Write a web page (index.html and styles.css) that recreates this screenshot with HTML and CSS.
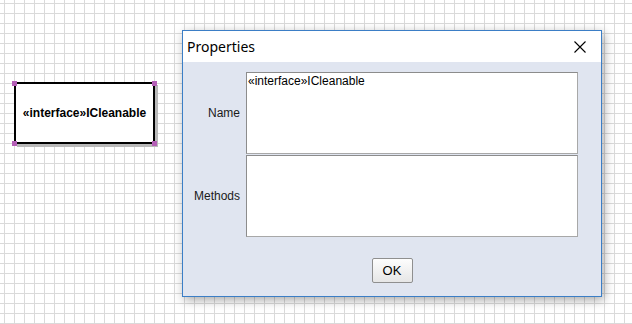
FILE: index.html
```html
<!DOCTYPE html>
<html lang="en">
<head>
  <meta charset="UTF-8">
  <meta name="viewport" content="width=device-width, initial-scale=1.0">
  <title>Class Diagram</title>
  <link rel="stylesheet" href="styles.css">
</head>
<body>
  <div class="canvas">
    <div class="node">
      <span class="handle tl"></span>
      <span class="handle tr"></span>
      <span class="handle bl"></span>
      <span class="handle br"></span>
      <span class="node-label">«interface»ICleanable</span>
    </div>

    <div class="dialog">
      <div class="titlebar">
        <span class="title">Properties</span>
        <svg class="close" width="12" height="12" viewBox="0 0 12 12">
          <path d="M0.5 0.5 L11.5 11.5 M11.5 0.5 L0.5 11.5" stroke="#000" stroke-width="1.1" fill="none"/>
        </svg>
      </div>
      <div class="dialog-body">
        <div class="fields">
          <label for="name">Name</label>
          <textarea id="name">«interface»ICleanable</textarea>
          <label for="methods">Methods</label>
          <textarea id="methods"></textarea>
        </div>
        <div class="buttons">
          <button type="button">OK</button>
        </div>
      </div>
    </div>
  </div>
</body>
</html>
```

FILE: styles.css
```css
:root {
  --grid-line: #dadada;
  --dialog-border: #3b7ec6;
  --dialog-bg: #e0e5f0;
  --handle: #b45fb6;
  --text: #1a1a1a;
}

html, body {
  margin: 0;
  padding: 0;
}

body {
  font-family: "Liberation Sans", Arial, sans-serif;
  background-color: #fff;
  background-image:
    linear-gradient(to right, var(--grid-line) 1px, transparent 1px),
    linear-gradient(to bottom, var(--grid-line) 1px, transparent 1px);
  background-size: 10px 10px;
  background-position: 4px 3px;
  min-height: 324px;
  overflow: hidden;
}

.canvas {
  position: relative;
  width: 632px;
  height: 324px;
}

/* diagram node */
.node {
  position: absolute;
  left: 14px;
  top: 82px;
  width: 141px;
  height: 62px;
  box-sizing: border-box;
  border: 2px solid #000;
  background: #fff;
  box-shadow: 3px 3px 0 #b9b9b9;
  display: flex;
  align-items: center;
  justify-content: center;
}

.node-label {
  font-size: 12px;
  font-weight: bold;
  color: #000;
  white-space: nowrap;
}

.handle {
  position: absolute;
  width: 5px;
  height: 5px;
  background: var(--handle);
}

.handle.tl { left: -4px; top: -3px; }
.handle.tr { right: -4px; top: -3px; }
.handle.bl { left: -4px; bottom: -4px; }
.handle.br { right: -4px; bottom: -4px; }

/* properties dialog */
.dialog {
  position: absolute;
  left: 182px;
  top: 30px;
  width: 420px;
  box-sizing: border-box;
  border: 1px solid var(--dialog-border);
  background: var(--dialog-bg);
  box-shadow: 2px 3px 10px rgba(0, 0, 0, 0.35);
}

.titlebar {
  height: 31px;
  background: #fff;
  display: flex;
  align-items: center;
  justify-content: space-between;
  padding: 0 15px 0 4px;
}

.title {
  font-family: "Noto Sans", sans-serif;
  font-size: 14px;
  color: #000;
}

.dialog-body {
  padding: 10px 23px 13px 0;
}

.fields {
  display: grid;
  grid-template-columns: 63px 332px;
  grid-template-rows: 82px 82px;
  row-gap: 1px;
}

.fields label {
  align-self: center;
  text-align: right;
  padding-right: 6px;
  font-size: 12px;
  color: var(--text);
}

.fields textarea {
  box-sizing: border-box;
  margin: 0;
  padding: 1px 1px;
  width: 332px;
  height: 82px;
  resize: none;
  border: 1px solid #8c8c8c;
  border-right-color: #a8a8a8;
  border-bottom-color: #a8a8a8;
  background: #fff;
  font-family: "Liberation Sans", Arial, sans-serif;
  font-size: 12px;
  color: #000;
  outline: none;
}

.buttons {
  display: flex;
  justify-content: center;
  margin-top: 21px;
  padding-left: 23px;
}

.buttons button {
  width: 41px;
  height: 25px;
  padding: 0;
  border: 1px solid #8f8f8f;
  border-radius: 2px;
  background: linear-gradient(to bottom, #fdfdfd, #e6e6e6);
  font-family: "Liberation Sans", Arial, sans-serif;
  font-size: 13px;
  color: #000;
}
```
